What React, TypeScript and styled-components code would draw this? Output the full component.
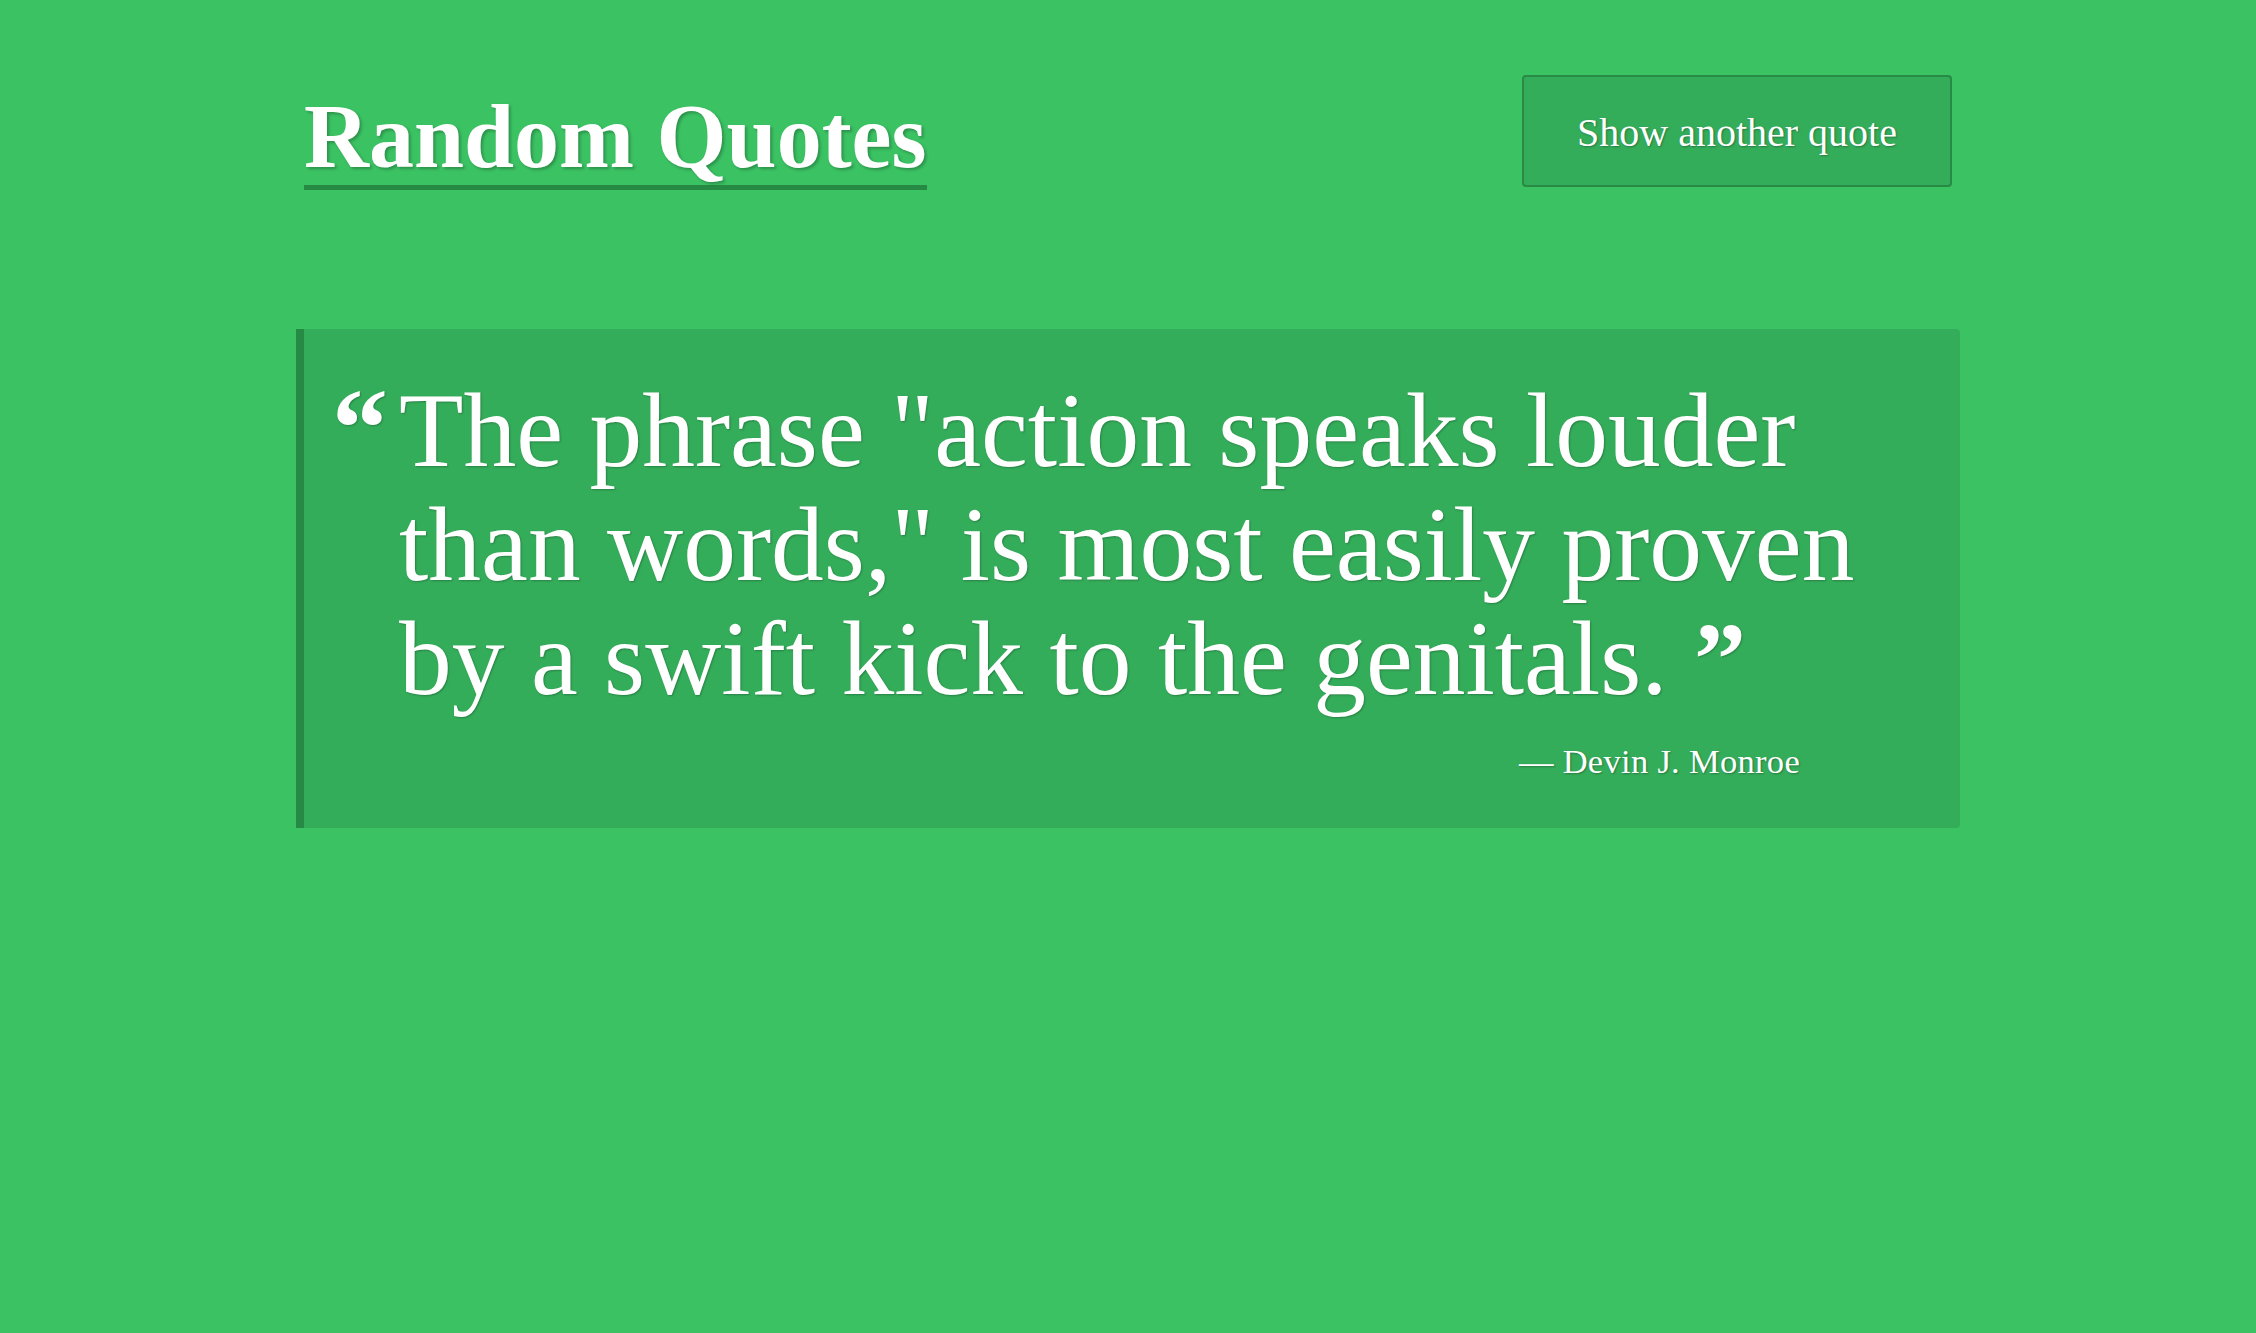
import React from "react";
import styled, { createGlobalStyle } from "styled-components";

const Global = createGlobalStyle`
  html, body {
    margin: 0;
    padding: 0;
    background: #3bc263;
    min-height: 100%;
  }
  body {
    font-family: "Liberation Serif", "Times New Roman", serif;
    color: #ffffff;
    min-height: 1333px;
  }
`;

const Page = styled.div`
  width: 1664px;
  margin: 0 auto;
`;

const Header = styled.header`
  display: flex;
  justify-content: space-between;
  align-items: flex-start;
  padding: 75px 8px 0;
`;

const Title = styled.h1`
  margin: 17px 0 0;
  font-family: "Liberation Serif", "Times New Roman", serif;
  font-weight: 700;
  font-size: 90px;
  line-height: 1;
  padding-bottom: 3px;
  border-bottom: 5px solid #278a44;
  color: #ffffff;
  text-shadow: 2px 2px 3px rgba(0, 0, 0, 0.25);
  cursor: pointer;
`;

const Button = styled.button`
  box-sizing: border-box;
  width: 430px;
  height: 112px;
  padding-top: 3px;
  background: #34ad5a;
  border: 2px solid #288a45;
  border-radius: 4px;
  color: #ffffff;
  font-family: "Liberation Serif", "Times New Roman", serif;
  font-size: 40px;
  text-shadow: 1px 1px 2px rgba(0, 0, 0, 0.3);
  cursor: pointer;
`;

const QuoteBox = styled.blockquote`
  box-sizing: border-box;
  margin: 139px 0 0;
  min-height: 498px;
  background: #34ad5a;
  border-left: 8px solid #278a44;
  border-radius: 0 4px 4px 0;
  padding: 42px 64px 47px 32px;
  display: flex;
  flex-direction: column;
`;

const QuoteBody = styled.div`
  display: flex;
  align-items: baseline;
`;

const Mark = styled.span`
  flex: 0 0 67px;
  margin-left: -4px;
  font-family: "Liberation Serif", "Times New Roman", serif;
  font-weight: 700;
  font-size: 112px;
  line-height: 114px;
  text-shadow: 1px 1px 2px rgba(0, 0, 0, 0.25);
`;

const QuoteText = styled.p`
  flex: 1;
  margin: 0;
  font-family: "Liberation Serif", "Times New Roman", serif;
  font-size: 105.5px;
  line-height: 114px;
  text-shadow: 1px 1px 2px rgba(0, 0, 0, 0.25);
`;

const CloseMark = styled.span`
  font-weight: 700;
  font-size: 104px;
  line-height: 1;
`;

const Author = styled.cite`
  display: block;
  margin-top: 26px;
  padding-right: 96px;
  text-align: right;
  font-style: normal;
  font-family: "Liberation Serif", "Times New Roman", serif;
  font-size: 34.5px;
  letter-spacing: 0.3px;
  text-shadow: 1px 1px 2px rgba(0, 0, 0, 0.3);
`;

export default function App() {
  return (
    <>
      <Global />
      <Page>
        <Header>
          <Title>Random Quotes</Title>
          <Button>Show another quote</Button>
        </Header>
        <QuoteBox>
          <QuoteBody>
            <Mark>“</Mark>
            <QuoteText>
              The phrase "action speaks louder than words," is most easily
              proven by a swift kick to the genitals. <CloseMark>”</CloseMark>
            </QuoteText>
          </QuoteBody>
          <Author>— Devin J. Monroe</Author>
        </QuoteBox>
      </Page>
    </>
  );
}
